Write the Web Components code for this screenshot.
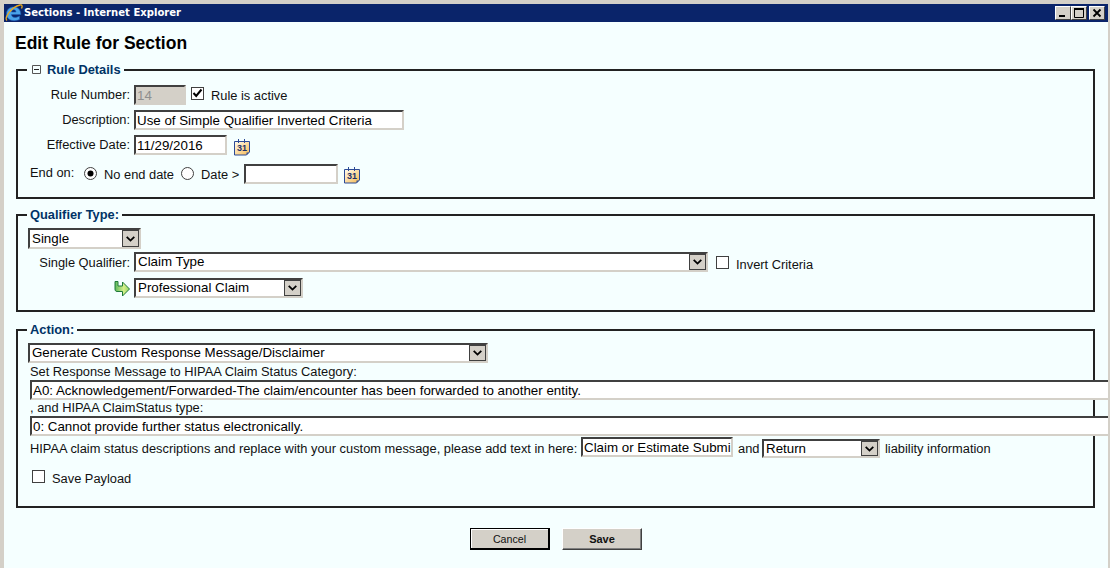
<!DOCTYPE html>
<html>
<head>
<meta charset="utf-8">
<title>Sections - Internet Explorer</title>
<style>
    html, body { margin: 0; padding: 0; height: 100%; overflow: hidden; }
    body { font: 12.85px/16px "Liberation Sans", Arial, sans-serif; color: #111; }
    .row { display: flex; align-items: flex-start; }
    .lbl { width: 112px; text-align: right; margin: 2px 4px 0 0; flex: none; }
    .stack { display: flex; flex-direction: column; }
</style>
</head>
<body>
<ie-window caption="Sections - Internet Explorer">
    <page-heading>Edit Rule for Section</page-heading>

    <rule-group style="margin-top: 9px; height: 137px" collapsible>
        <span slot="legend">Rule Details</span>
        <div class="stack" style="padding-top: 7px; gap: 5px">
            <div class="row">
                <span class="lbl">Rule Number:</span>
                <text-box disabled style="width: 52px">14</text-box>
                <check-box checked style="margin: 2px 0 0 5px">Rule is active</check-box>
            </div>
            <div class="row">
                <span class="lbl">Description:</span>
                <text-box style="width: 270px">Use of Simple Qualifier Inverted Criteria</text-box>
            </div>
            <div class="row">
                <span class="lbl">Effective Date:</span>
                <text-box style="width: 93px">11/29/2016</text-box>
                <cal-icon style="margin: 4px 0 0 7px"></cal-icon>
            </div>
            <div class="row" style="margin-top: 3px; padding-left: 12px">
                <span style="width: 54px; margin-top: 1px">End on:</span>
                <radio-box checked style="margin-top: 3px">No end date</radio-box>
                <radio-box style="margin: 3px 0 0 7px">Date &gt;</radio-box>
                <text-box style="width: 94px; margin-left: 5px"></text-box>
                <cal-icon style="margin: 3px 0 0 6px"></cal-icon>
            </div>
        </div>
    </rule-group>

    <rule-group style="margin-top: 8px; height: 105px">
        <span slot="legend">Qualifier Type:</span>
        <div class="stack" style="padding: 5px 0 0 10px">
            <drop-down style="width: 113px; height: 21px">Single</drop-down>
            <div class="row" style="margin: 3px 0 0 -10px">
                <span class="lbl" style="margin-top: 3px">Single Qualifier:</span>
                <drop-down style="width: 574px">Claim Type</drop-down>
                <check-box style="margin: 4px 0 0 8px">Invert Criteria</check-box>
            </div>
            <div class="row" style="margin: 5px 0 0 -10px">
                <next-arrow style="margin: 2px 4px 0 96px"></next-arrow>
                <drop-down style="width: 169px">Professional Claim</drop-down>
            </div>
        </div>
    </rule-group>

    <rule-group style="margin-top: 10px; height: 186px">
        <span slot="legend">Action:</span>
        <div class="stack" style="padding: 5px 0 0 10px">
            <drop-down style="width: 460px">Generate Custom Response Message/Disclaimer</drop-down>
            <div style="margin: 1px 0 0 2px">Set Response Message to HIPAA Claim Status Category:</div>
            <text-box style="width: 1080px; margin-left: 2px">A0: Acknowledgement/Forwarded-The claim/encounter has been forwarded to another entity.</text-box>
            <div style="margin-left: 2px">, and HIPAA ClaimStatus type:</div>
            <text-box style="width: 1080px; margin-left: 2px">0: Cannot provide further status electronically.</text-box>
            <div class="row" style="margin: 1px 0 0 2px">
                <span style="margin: 4px 4px 0 0; width: 547px; flex: none; white-space: nowrap">HIPAA claim status descriptions and replace with your custom message, please add text in here:</span>
                <text-box style="width: 152px">Claim or Estimate Submi</text-box>
                <span style="margin: 4px 0 0 5px; width: 24px; flex: none">and</span>
                <drop-down style="width: 118px; height: 19px; margin-top: 2px">Return</drop-down>
                <span style="margin: 4px 0 0 5px">liability information</span>
            </div>
            <check-box style="margin: 12px 0 0 4px">Save Payload</check-box>
        </div>
    </rule-group>

    <div class="row" style="gap: 12px; margin: 20px 0 0 454px">
        <push-button default>Cancel</push-button>
        <push-button bold>Save</push-button>
    </div>
</ie-window>

<script>
const grey = '#d4d0c8'
const insetEdge = `
    border: 2px solid;
    border-color: #404040 ${grey} ${grey} #404040;
    box-sizing: border-box;
`

class IeWindow extends HTMLElement {
    constructor() {
        super()
        const shadowRoot = this.attachShadow({mode: 'open'})
        shadowRoot.innerHTML = `
            <style>
                :host {
                    display: flex;
                    flex-direction: column;
                    width: 1110px;
                    height: 568px;
                    box-sizing: border-box;
                    overflow: hidden;
                    background: ${grey};
                    padding: 4px 2px 0 4px;
                }
                .bar {
                    display: flex;
                    align-items: center;
                    flex: none;
                    height: 18px;
                    background: #0a246a;
                    color: #fff;
                    font: bold 11.2px/18px "DejaVu Sans Condensed", "DejaVu Sans", sans-serif;
                }
                .bar svg.logo { flex: none; margin: 0 1px 0 1px; }
                .caption { flex: 1; }
                .btns { display: flex; margin-right: 3px; }
                .btns b {
                    display: flex;
                    align-items: center;
                    justify-content: center;
                    width: 14px;
                    height: 12px;
                    background: ${grey};
                    border: 1px solid;
                    border-color: #fff #404040 #404040 #fff;
                }
                .btns b:last-child { margin-left: 2px; }
                main {
                    flex: 1;
                    background: #f5ffff;
                    padding: 0 0 0 12px;
                    overflow: hidden;
                }
            </style>
            <div class="bar">
                <svg class="logo" width="18" height="18" viewBox="0 0 18 18">
                    <path d="M1.500 10C1.500 5.500 4.800 3 8.800 3c4.400 0 7 3 7 7.500H6.500c0 3.200 4.200 4 8 1.500v3.500c-5.500 2.500-13 1-13-5.500zM6.500 8H11c0-3-4.300-3-4.500 0z" fill="#4aa3e8" stroke="#1c5fb8" stroke-width=".6"/>
                    <path d="M2 16.500C-1 14 6 3 15 1c2.500-.5 2.500 1.500 1.500 3.500" fill="none" stroke="#e8a820" stroke-width="1.300"/>
                </svg>
                <span class="caption"></span>
                <div class="btns">
                    <b><svg width="12" height="10" viewBox="0 0 12 10"><path d="M2 7h6v2H2z"/></svg></b>
                    <b><svg width="12" height="10" viewBox="0 0 12 10"><path d="M1.500 1.500h9v8h-9z" fill="none" stroke="#000"/><path d="M1 0h10v2H1z"/></svg></b>
                    <b><svg width="12" height="10" viewBox="0 0 12 10"><path d="M2.500 1.500l7 7M9.500 1.500l-7 7" stroke="#000" stroke-width="1.800"/></svg></b>
                </div>
            </div>
            <main><slot></slot></main>
        `
        shadowRoot.querySelector('.caption').textContent = this.getAttribute('caption')
    }
}

class PageHeading extends HTMLElement {
    constructor() {
        super()
        const shadowRoot = this.attachShadow({mode: 'open'})
        shadowRoot.innerHTML = `
            <style>
                :host {
                    display: block;
                    margin: 11px 0 0 -1px;
                    font: bold 17.5px/20px "Liberation Sans", Arial, sans-serif;
                    color: #000;
                }
            </style>
            <slot></slot>
        `
    }
}

class RuleGroup extends HTMLElement {
    constructor() {
        super()
        const shadowRoot = this.attachShadow({mode: 'open'})
        const icon = this.hasAttribute('collapsible')
            ? `<svg width="10" height="10" viewBox="0 0 10 10"><path d="M.5.500h8v8h-8z" fill="none" stroke="#555"/><path d="M2 4.500h5" stroke="#222"/></svg>`
            : ''
        shadowRoot.innerHTML = `
            <style>
                :host { display: block; width: 1079px; box-sizing: border-box; }
                fieldset {
                    margin: 0;
                    padding: 0;
                    height: 100%;
                    box-sizing: border-box;
                    border: 2px solid #222;
                    min-inline-size: 0;
                }
                legend {
                    margin-left: 9px;
                    padding: 0 3px;
                    font-weight: bold;
                    line-height: 16px;
                    color: #003366;
                }
                legend svg { margin: 0 5px 0 2px; vertical-align: -1px; }
            </style>
            <fieldset>
                <legend>${icon}<slot name="legend"></slot></legend>
                <slot></slot>
            </fieldset>
        `
    }
}

class TextBox extends HTMLElement {
    constructor() {
        super()
        const shadowRoot = this.attachShadow({mode: 'open'})
        shadowRoot.innerHTML = `
            <style>
                :host {
                    display: block;
                    position: relative;
                    flex: none;
                    height: 20px;
                    ${insetEdge}
                    background: #fff;
                    padding: 1px 1px 0;
                    font-size: 13.33px;
                    line-height: 16px;
                    white-space: nowrap;
                    overflow: hidden;
                    color: #000;
                }
                :host([disabled]) { background: ${grey}; color: #8f8f8f; }
            </style>
            <slot></slot>
        `
    }
}

class DropDown extends HTMLElement {
    constructor() {
        super()
        const shadowRoot = this.attachShadow({mode: 'open'})
        shadowRoot.innerHTML = `
            <style>
                :host {
                    display: flex;
                    align-items: center;
                    flex: none;
                    height: 20px;
                    ${insetEdge}
                    background: #fff;
                    color: #000;
                    font-size: 13.33px;
                    white-space: nowrap;
                }
                .value { flex: 1; padding-left: 2px; }
                .arrow {
                    flex: none;
                    width: 17px;
                    height: 100%;
                    box-sizing: border-box;
                    display: flex;
                    align-items: center;
                    justify-content: center;
                    background: ${grey};
                    border: 1px solid #404040;
                }
            </style>
            <span class="value"><slot></slot></span>
            <span class="arrow">
                <svg width="9" height="6" viewBox="0 0 9 6"><path d="M.7.800L4.500 4.600 8.300.800" fill="none" stroke="#000" stroke-width="1.800"/></svg>
            </span>
        `
    }
}

class CheckBox extends HTMLElement {
    constructor() {
        super()
        const shadowRoot = this.attachShadow({mode: 'open'})
        const tick = this.hasAttribute('checked')
            ? `<svg width="11" height="11" viewBox="0 0 11 11"><path d="M1.500 5l2.700 3L9.500 1.500" fill="none" stroke="#000" stroke-width="2"/></svg>`
            : ''
        shadowRoot.innerHTML = `
            <style>
                :host { display: flex; align-items: flex-start; flex: none; }
                i {
                    flex: none;
                    width: 13px;
                    height: 13px;
                    box-sizing: border-box;
                    border: 1px solid #404040;
                    background: #fff;
                    display: flex;
                    align-items: center;
                    justify-content: center;
                }
                span { margin: 1px 0 0 7px; }
            </style>
            <i>${tick}</i><span><slot></slot></span>
        `
    }
}

class RadioBox extends HTMLElement {
    constructor() {
        super()
        const shadowRoot = this.attachShadow({mode: 'open'})
        const dot = this.hasAttribute('checked') ? '<circle cx="6.500" cy="6.500" r="3" fill="#000"/>' : ''
        shadowRoot.innerHTML = `
            <style>
                :host { display: flex; align-items: flex-start; flex: none; }
                svg { flex: none; }
                span { margin: 0 0 0 7px; }
            </style>
            <svg width="13" height="13" viewBox="0 0 13 13">
                <circle cx="6.500" cy="6.500" r="6" fill="#fff" stroke="#404040"/>${dot}
            </svg>
            <span><slot></slot></span>
        `
    }
}

class CalIcon extends HTMLElement {
    constructor() {
        super()
        const shadowRoot = this.attachShadow({mode: 'open'})
        shadowRoot.innerHTML = `
            <style>
                :host { display: block; flex: none; width: 16px; height: 17px; }
                text { font: bold 9px "Liberation Sans", Arial, sans-serif; fill: #1c2f6a; }
            </style>
            <svg width="16" height="17" viewBox="0 0 16 17">
                <defs>
                    <linearGradient id="page" x1="0" y1="0" x2="1" y2="1">
                        <stop offset="0" stop-color="#fffdf2"/>
                        <stop offset="1" stop-color="#f6b850"/>
                    </linearGradient>
                </defs>
                <path d="M.5 2.500h15v10.500l-3 3H.5z" fill="url(#page)" stroke="#2c4a96"/>
                <path d="M4.500 0v4M10.500 0v4" stroke="#2c4a96"/>
                <path d="M15 13.500h-2.500v2.500z" fill="#2c4a96"/>
                <text x="3" y="12">31</text>
            </svg>
        `
    }
}

class NextArrow extends HTMLElement {
    constructor() {
        super()
        const shadowRoot = this.attachShadow({mode: 'open'})
        shadowRoot.innerHTML = `
            <style>:host { display: block; flex: none; width: 16px; height: 17px; }</style>
            <svg width="16" height="17" viewBox="0 0 16 17">
                <defs>
                    <linearGradient id="arrow" x1="0" y1="0" x2="1" y2="0">
                        <stop offset="0" stop-color="#5cb85c"/>
                        <stop offset=".6" stop-color="#d6f08a"/>
                        <stop offset="1" stop-color="#8fd060"/>
                    </linearGradient>
                </defs>
                <path d="M1 1.500h3v4.500h4.500V2L15.500 9 8.500 16v-4.500H3C1.500 11.500 1 10.500 1 9z" fill="url(#arrow)" stroke="#1f7a3a"/>
            </svg>
        `
    }
}

class PushButton extends HTMLElement {
    constructor() {
        super()
        const shadowRoot = this.attachShadow({mode: 'open'})
        shadowRoot.innerHTML = `
            <style>
                :host {
                    display: flex;
                    align-items: center;
                    justify-content: center;
                    width: 80px;
                    height: 22px;
                    box-sizing: border-box;
                    background: ${grey};
                    border: 1px solid;
                    border-color: #fff #404040 #404040 #fff;
                    box-shadow: inset -1px -1px 0 #808080;
                    font-size: 10.67px;
                    color: #111;
                }
                :host([default]) {
                    border-right-width: 2px;
                    border-bottom-width: 2px;
                    border-color: #000;
                    box-shadow: inset 1px 1px 0 #fff;
                }
                :host([bold]) { font-weight: bold; font-size: 11px; }
            </style>
            <slot></slot>
        `
    }
}

customElements.define('ie-window', IeWindow)
customElements.define('page-heading', PageHeading)
customElements.define('rule-group', RuleGroup)
customElements.define('text-box', TextBox)
customElements.define('drop-down', DropDown)
customElements.define('check-box', CheckBox)
customElements.define('radio-box', RadioBox)
customElements.define('cal-icon', CalIcon)
customElements.define('next-arrow', NextArrow)
customElements.define('push-button', PushButton)
</script>
</body>
</html>
